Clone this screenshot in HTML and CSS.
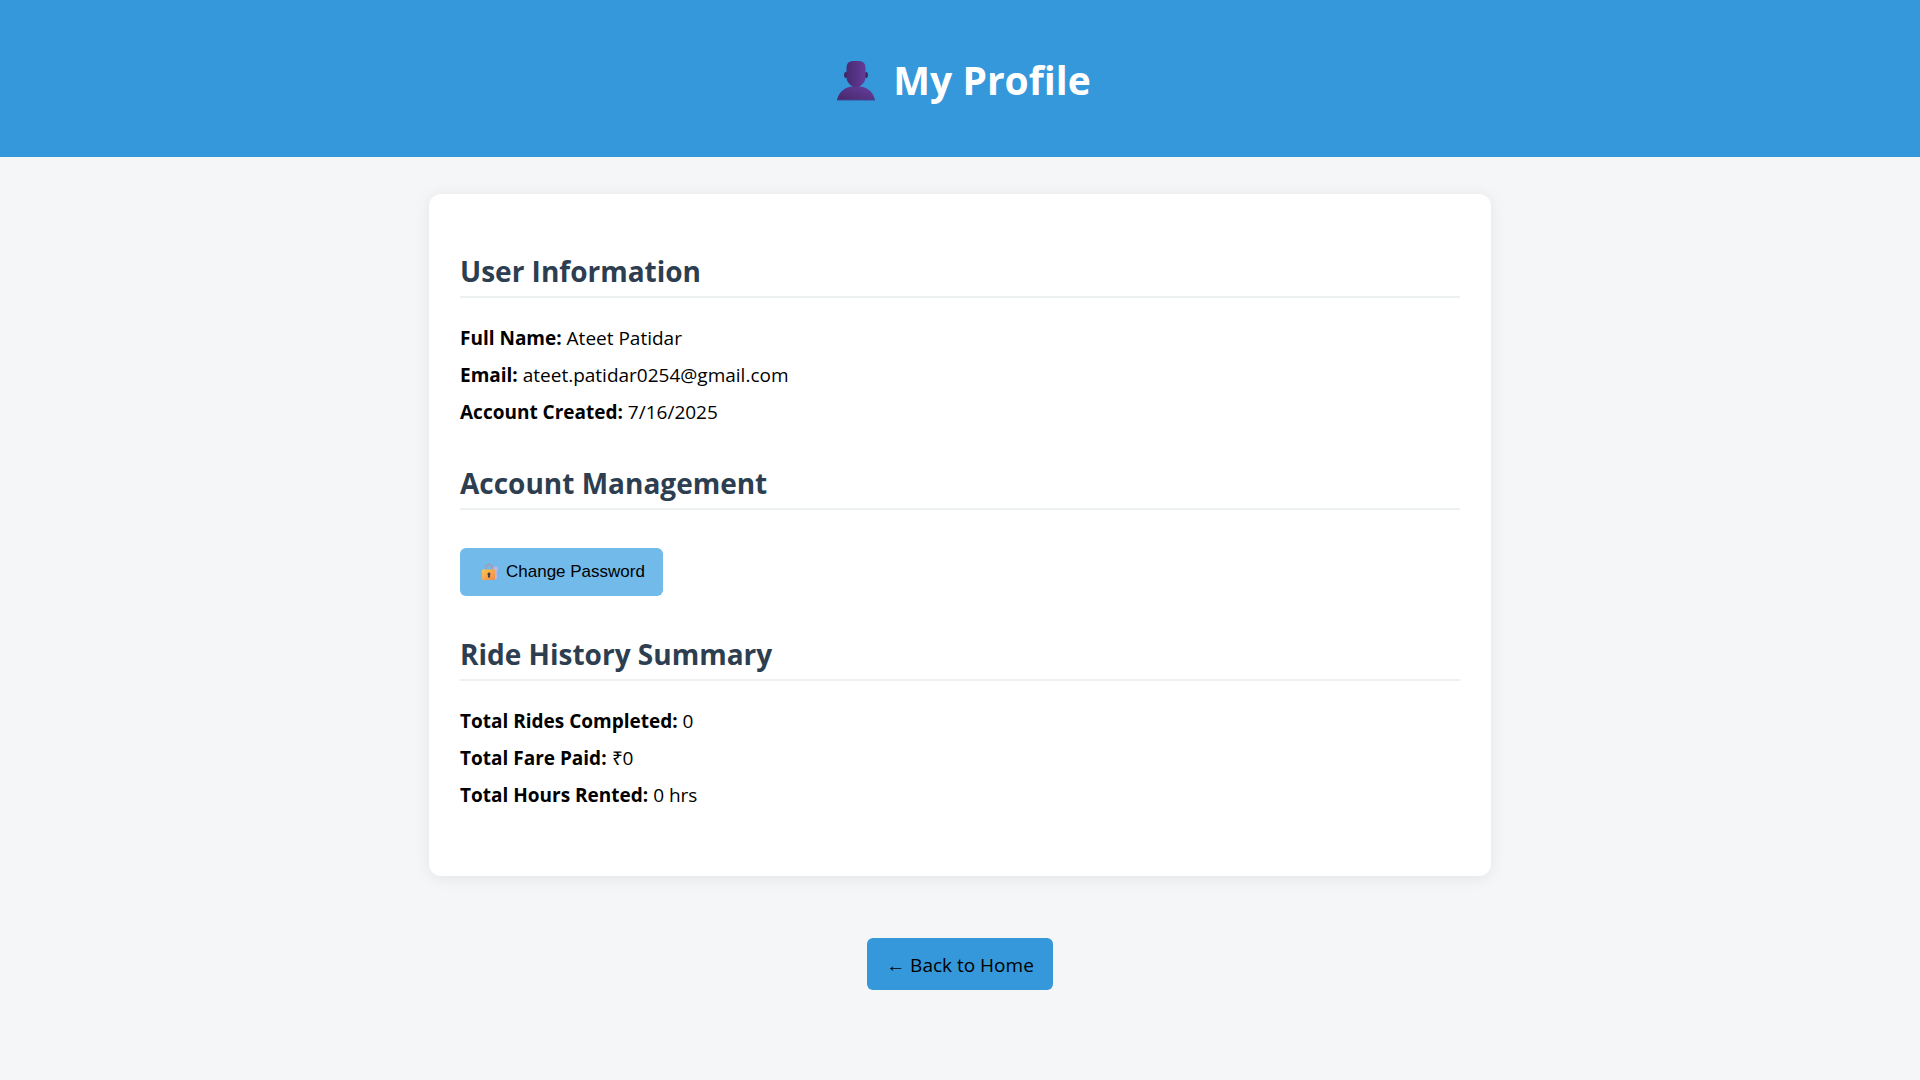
FILE: index.html
```html
<!DOCTYPE html>
<html lang="en">
<head>
  <meta charset="utf-8">
  <meta name="viewport" content="width=device-width, initial-scale=1">
  <title>My Profile</title>
  <link rel="stylesheet" href="styles.css">
</head>
<body>
  <header class="page-header">
    <h1 class="page-title">
      <svg class="icon-user" viewBox="0 0 54 42" aria-hidden="true">
        <defs>
          <linearGradient id="head" x1="0" y1="0" x2="1" y2="0">
            <stop offset="0" stop-color="#482a70"/>
            <stop offset="1" stop-color="#633c99"/>
          </linearGradient>
          <linearGradient id="body" x1="0" y1="1" x2="1" y2="0">
            <stop offset="0" stop-color="#46276a"/>
            <stop offset="1" stop-color="#6840a0"/>
          </linearGradient>
        </defs>
        <ellipse cx="17" cy="16" rx="2" ry="3" fill="#43285f"/>
        <ellipse cx="37" cy="16" rx="2" ry="3" fill="#43285f"/>
        <path d="M8 41C10 32 17 27 27 27S44 32 46 41Z" fill="url(#body)"/>
        <path d="M17.500 9Q17.500 2 24 2H30Q36.500 2 36.500 9V18C36.500 23.500 32 28 27 28S17.500 23.500 17.500 18Z" fill="url(#head)"/>
        <path d="M8 41H46" stroke="#40469a" stroke-width="1"/>
      </svg>
      My Profile
    </h1>
  </header>

  <main class="page-main">
    <div class="card">
      <section class="section">
        <h2 class="section-title">User Information</h2>
        <div class="details">
          <p><strong>Full Name:</strong> Ateet Patidar</p>
          <p><strong>Email:</strong> ateet.patidar0254@gmail.com</p>
          <p><strong>Account Created:</strong> 7/16/2025</p>
        </div>
      </section>

      <section class="section">
        <h2 class="section-title">Account Management</h2>
        <button class="btn btn-password" type="button">
          <svg class="icon-lock" viewBox="0 0 18 18" aria-hidden="true">
            <defs>
              <linearGradient id="lock" x1="0" y1="0" x2="1" y2="1">
                <stop offset="0" stop-color="#ffc54a"/>
                <stop offset="1" stop-color="#f08a4e"/>
              </linearGradient>
            </defs>
            <path d="M5 7V4.800A3.200 3.200 0 0 1 11.400 4.800V7" fill="none" stroke="#a39cb0" stroke-width="1.500"/>
            <path d="M12.200 6A2.500 2.500 0 1 1 16.500 7.500L16 8.500V15.500L14.800 16.500L13.500 15.500V8.500Z" fill="#bdb4e0"/>
            <rect x="1" y="6.500" width="13" height="10.500" rx="1" fill="url(#lock)"/>
            <path d="M8 9.500A1.700 1.700 0 0 1 8.900 12.500L9.100 14.500H6.900L7.100 12.500A1.700 1.700 0 0 1 8 9.500Z" fill="#4a3b4d"/>
          </svg>
          Change Password
        </button>
      </section>

      <section class="section">
        <h2 class="section-title">Ride History Summary</h2>
        <div class="details">
          <p><strong>Total Rides Completed:</strong> 0</p>
          <p><strong>Total Fare Paid:</strong> ₹0</p>
          <p><strong>Total Hours Rented:</strong> 0 hrs</p>
        </div>
      </section>
    </div>

    <a class="btn btn-home" href="#">← Back to Home</a>
  </main>
</body>
</html>
```
FILE: styles.css
```css
* {
  box-sizing: border-box;
}

body {
  margin: 0;
  min-height: 100vh;
  background: #f4f6f8;
  color: #000;
  font-family: "Segoe UI", "Open Sans", "Liberation Sans", sans-serif;
  font-size: 19px;
  line-height: 26px;
}

.page-header {
  padding: 53px 20px 50px;
  background: #3498db;
  color: #fff;
}

.page-title {
  display: flex;
  align-items: center;
  justify-content: center;
  gap: 10px;
  margin: 0;
  font-size: 39px;
  line-height: 54px;
}

.icon-user {
  width: 54px;
  height: 42px;
}

.page-main {
  display: flex;
  flex-direction: column;
  align-items: center;
  gap: 62px;
  padding: 37px 20px 60px;
}

.card {
  width: 100%;
  max-width: 1062px;
  padding: 57px 31px 30px;
  border-radius: 12px;
  background: #fff;
  box-shadow: 0 2px 16px rgba(0, 0, 0, 0.08);
}

.section {
  margin-bottom: 38px;
}

.section-title {
  margin: 0;
  padding-bottom: 5px;
  border-bottom: 2px solid #ecf0f1;
  color: #2c3e50;
  font-size: 28px;
  line-height: 40px;
}

.details {
  display: flex;
  flex-direction: column;
  gap: 11px;
  margin-top: 27px;
}

.details p {
  margin: 0;
}

.btn {
  display: flex;
  align-items: center;
  border: 0;
  border-radius: 6px;
  color: #000;
  cursor: pointer;
  text-decoration: none;
}

.btn-password {
  gap: 7px;
  margin-top: 38px;
  padding: 12px 18px 12px 21px;
  background: #72baea;
  font-family: Arial, "Liberation Sans", sans-serif;
  font-size: 17px;
  line-height: 24px;
}

.icon-lock {
  width: 18px;
  height: 18px;
}

.btn-home {
  padding: 14px 19px 12px;
  background: #3498db;
}
```
